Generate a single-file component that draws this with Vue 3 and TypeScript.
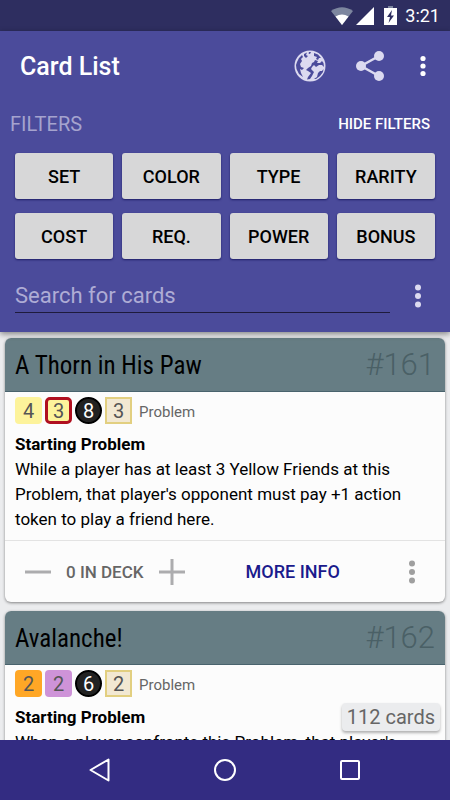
<script setup lang="ts">
import { ref } from 'vue'

interface Pip {
  value: number
  kind: string
}

interface Card {
  name: string
  number: number
  pips: Pip[]
  type: string
  heading: string
  text: string
  inDeck: number
}

const filters: string[] = ['SET', 'COLOR', 'TYPE', 'RARITY', 'COST', 'REQ.', 'POWER', 'BONUS']
const query = ref('')
const filtersOpen = ref(true)

const cards = ref<Card[]>([
  {
    name: 'A Thorn in His Paw',
    number: 161,
    pips: [
      { value: 4, kind: 'yellow' },
      { value: 3, kind: 'outlined' },
      { value: 8, kind: 'round' },
      { value: 3, kind: 'bonus' },
    ],
    type: 'Problem',
    heading: 'Starting Problem',
    text: "While a player has at least 3 Yellow Friends at this Problem, that player's opponent must pay +1 action token to play a friend here.",
    inDeck: 0,
  },
  {
    name: 'Avalanche!',
    number: 162,
    pips: [
      { value: 2, kind: 'orange' },
      { value: 2, kind: 'purple' },
      { value: 6, kind: 'round' },
      { value: 2, kind: 'bonus' },
    ],
    type: 'Problem',
    heading: 'Starting Problem',
    text: "When a player confronts this Problem, that player's",
    inDeck: 0,
  },
])
</script>

<template>
  <div class="screen">
    <div class="status">
      <svg class="wifi" width="22" height="18" viewBox="0 0 22 18" aria-hidden="true">
        <path d="M0 4Q11-3.500 22 4L11 18Z" fill="#7d869f" />
        <path d="M4.500 9.500Q11 5.500 17.500 9.500L11 18Z" fill="#fff" />
      </svg>
      <svg class="signal" width="18" height="18" viewBox="0 0 18 18" aria-hidden="true">
        <path d="M18 0V18H0Z" fill="#fff" />
      </svg>
      <svg class="battery" width="13" height="19" viewBox="0 0 13 19" aria-hidden="true">
        <path d="M4 0H9V2H4Z" fill="#7d869f" />
        <path d="M0 2H13V19H0Z" fill="#fff" />
        <path d="M8 4L3 11H6L4.500 17L10 9.500H7Z" fill="#2e2e60" />
      </svg>
      <span class="clock">3:21</span>
    </div>

    <header class="header">
      <div class="appbar">
        <h1>Card List</h1>
        <button class="icon" aria-label="Language">
          <svg width="32" height="32" viewBox="0 0 32 32">
            <circle cx="16" cy="16" r="15.500" fill="#dcdaf0" />
            <g fill="#4b4b9b">
              <path d="M3 12L5 8L8 5L9 7L7 9L8 11L6 14L7 17L10 18L8 20L6 19L7 23L9 27L5 24L2.500 19L2 15Z" />
              <path d="M10 4L13 2.500L12 5L14 6L12 8L10 6Z" />
              <path d="M15 2L17 2L16 4L14.500 3.500Z" />
              <path d="M20 3L24 4.500L27 8L25 8L24 10L22 9L23 7L20 6Z" />
              <path d="M21 10L24 11L23 13L26 13L28 11L29.500 13L30 17L28 15L25 15L22 17L20 15L18 17L17 19L20 22L18 26L16 29L13 29.500L14 27L17 23L14 21L12 20L14 18L17 16L18 13L20 12Z" />
              <path d="M29.500 19L29 22L26 26L22 29L20 29L23 27L24 23L26 21L28 21Z" />
            </g>
          </svg>
        </button>
        <button class="icon" aria-label="Share">
          <svg width="28" height="30" viewBox="0 0 28 30">
            <path d="M23 5L5 15L23 25" fill="none" stroke="#dcdaf0" stroke-width="2.500" />
            <circle cx="23" cy="5" r="5" fill="#dcdaf0" />
            <circle cx="5" cy="15" r="5" fill="#dcdaf0" />
            <circle cx="23" cy="25" r="5" fill="#dcdaf0" />
          </svg>
        </button>
        <button class="icon more" aria-label="More options">
          <svg width="6" height="22" viewBox="0 0 6 22" fill="#fff">
            <circle cx="3" cy="3.500" r="2.600" />
            <circle cx="3" cy="11" r="2.600" />
            <circle cx="3" cy="18.500" r="2.600" />
          </svg>
        </button>
      </div>

      <div class="filter-head">
        <h2>FILTERS</h2>
        <button class="hide" @click="filtersOpen = !filtersOpen">HIDE FILTERS</button>
      </div>

      <div v-if="filtersOpen" class="filters">
        <button v-for="f in filters" :key="f" class="filter">{{ f }}</button>
      </div>

      <div class="search">
        <input v-model="query" type="text" placeholder="Search for cards" aria-label="Search for cards" />
        <button class="icon more" aria-label="Search options">
          <svg width="6" height="24" viewBox="0 0 6 24" fill="#dcdaf0">
            <circle cx="3" cy="3.500" r="3" />
            <circle cx="3" cy="12" r="3" />
            <circle cx="3" cy="20.500" r="3" />
          </svg>
        </button>
      </div>
    </header>

    <main class="list">
      <article v-for="card in cards" :key="card.number" class="card">
        <div class="card-head">
          <h3>{{ card.name }}</h3>
          <span class="number">#{{ card.number }}</span>
        </div>
        <div class="card-body">
          <div class="pips">
            <span v-for="(pip, i) in card.pips" :key="i" class="pip" :class="pip.kind">{{ pip.value }}</span>
            <span class="type">{{ card.type }}</span>
          </div>
          <p class="rules"><b>{{ card.heading }}</b>{{ card.text }}</p>
        </div>
        <div class="actions">
          <button class="icon" aria-label="Remove from deck" @click="card.inDeck = Math.max(0, card.inDeck - 1)">
            <svg width="26" height="26" viewBox="0 0 26 26"><path d="M0 13H26" stroke="#acacae" stroke-width="3" /></svg>
          </button>
          <span class="count">{{ card.inDeck }} IN DECK</span>
          <button class="icon" aria-label="Add to deck" @click="card.inDeck++">
            <svg width="26" height="26" viewBox="0 0 26 26">
              <path d="M0 13H26M13 0V26" stroke="#acacae" stroke-width="3" />
            </svg>
          </button>
          <button class="info">MORE INFO</button>
          <button class="icon card-more" aria-label="Card options">
            <svg width="6" height="24" viewBox="0 0 6 24" fill="#9f9f9f">
              <circle cx="3" cy="3.500" r="3" />
              <circle cx="3" cy="12" r="3" />
              <circle cx="3" cy="20.500" r="3" />
            </svg>
          </button>
        </div>
      </article>
      <div class="total">112 cards</div>
    </main>

    <nav class="nav">
      <button class="icon" aria-label="Back">
        <svg width="24" height="26" viewBox="0 0 24 26">
          <path d="M20.500 2.500V23.500L2.500 13Z" fill="none" stroke="#fff" stroke-width="2" stroke-linejoin="round" />
        </svg>
      </button>
      <button class="icon" aria-label="Home">
        <svg width="24" height="24" viewBox="0 0 24 24">
          <circle cx="12" cy="12" r="10" fill="none" stroke="#fff" stroke-width="2" />
        </svg>
      </button>
      <button class="icon" aria-label="Recent apps">
        <svg width="24" height="24" viewBox="0 0 24 24">
          <rect x="3" y="3" width="18" height="18" rx="1" fill="none" stroke="#fff" stroke-width="2" />
        </svg>
      </button>
    </nav>
  </div>
</template>

<style>
body {
  margin: 0;
}
</style>

<style scoped>
.screen {
  display: flex;
  flex-direction: column;
  height: 100vh;
  overflow: hidden;
  background: #ebecee;
  color: #000;
  font-family: Roboto, "Liberation Sans", sans-serif;
}
h1,
h2,
h3,
p {
  margin: 0;
}
button {
  padding: 0;
  border: 0;
  background: none;
  font-family: inherit;
  cursor: pointer;
}
svg {
  display: block;
}
.icon {
  display: flex;
  align-items: center;
  justify-content: center;
}
.status {
  flex: none;
  display: flex;
  align-items: center;
  justify-content: flex-end;
  box-sizing: border-box;
  height: 31px;
  padding-right: 10px;
  background: #2e2e60;
}
.signal {
  margin-left: 3px;
}
.battery {
  margin-left: 10px;
}
.clock {
  margin-left: 8px;
  color: #fff;
  font-size: 18px;
  font-weight: 400;
}
.header {
  flex: none;
  position: relative;
  z-index: 1;
  background: #4b4b9b;
  box-shadow: 0 2px 6px rgba(0, 0, 0, 0.45);
}
.appbar {
  display: flex;
  align-items: center;
  height: 70px;
  padding: 0 10px 0 20px;
}
h1 {
  flex: 1;
  color: #fff;
  font-size: 25px;
  font-weight: 500;
}
.appbar .icon {
  width: 60px;
  height: 60px;
}
.appbar .more {
  width: 35px;
  margin-left: 5px;
}
.filter-head {
  display: flex;
  align-items: center;
  justify-content: space-between;
  height: 46px;
  padding: 0 20px 0 10px;
}
h2 {
  color: #a5a3ce;
  font-size: 20px;
  font-weight: 400;
}
.hide {
  color: #fff;
  font-size: 15px;
  font-weight: 500;
}
.filters {
  display: grid;
  grid-template-columns: repeat(4, 1fr);
  gap: 14px 9px;
  padding: 6px 15px 0;
}
.filter {
  height: 46px;
  border-radius: 3px;
  background: #d7d7d8;
  box-shadow: 0 1px 2px rgba(10, 10, 80, 0.7);
  color: #000;
  font-size: 18px;
  font-weight: 500;
}
.search {
  display: flex;
  align-items: center;
  height: 73px;
  padding-left: 15px;
}
.search input {
  flex: 1;
  min-width: 0;
  box-sizing: border-box;
  height: 34px;
  padding: 0;
  border: 0;
  border-bottom: 1px solid #1e1b3c;
  border-radius: 0;
  outline: 0;
  background: none;
  color: #fff;
  font-family: inherit;
  font-size: 22px;
}
.search input::placeholder {
  color: #aeacd5;
  opacity: 1;
}
.search .more {
  width: 55px;
  margin-right: 5px;
  height: 48px;
}
.list {
  flex: 1;
  min-height: 0;
  position: relative;
  display: flex;
  flex-direction: column;
  gap: 9px;
  padding: 6px 5px 0;
  overflow: hidden;
}
.card {
  flex: none;
  border-radius: 6px;
  background: #fcfcfc;
  box-shadow: 0 1px 3px rgba(0, 0, 0, 0.45);
  overflow: hidden;
}
.card-head {
  display: flex;
  align-items: center;
  justify-content: space-between;
  box-sizing: border-box;
  height: 54px;
  padding: 0 10px;
  border-bottom: 1px solid #49636d;
  background: #667d84;
}
h3 {
  padding-top: 2px;
  font-family: "Roboto Condensed", "Liberation Sans Narrow", Roboto, sans-serif;
  font-size: 25px;
  font-weight: 400;
}
.number {
  color: #4a6066;
  font-size: 31px;
  font-weight: 300;
}
.card-body {
  padding: 5px 10px 8px;
}
.pips {
  display: flex;
  align-items: center;
  gap: 3px;
}
.pip {
  display: flex;
  align-items: center;
  justify-content: center;
  box-sizing: border-box;
  width: 27px;
  height: 27px;
  border-radius: 4px;
  color: #555;
  font-size: 20px;
}
.yellow {
  background: #fdf39b;
}
.outlined {
  border: 3px solid #b01020;
  border-radius: 5px;
  background: #fdf39b;
}
.orange {
  background: #ffa726;
}
.purple {
  background: #ce93d8;
}
.round {
  border: 2px solid #000;
  border-radius: 50%;
  background: #222;
  color: #fff;
}
.bonus {
  border: 2px solid #e2cf80;
  border-radius: 0;
  background: #f2e8d2;
}
.type {
  margin-left: 4px;
  padding-top: 2px;
  color: #666;
  font-size: 15px;
}
.rules {
  margin-top: 8px;
  font-size: 17px;
  line-height: 25px;
}
.rules b {
  display: block;
}
.actions {
  display: flex;
  align-items: center;
  height: 61px;
  padding: 0 5px;
  border-top: 1px solid #e3e3e3;
}
.actions .icon {
  width: 56px;
  height: 60px;
}
.count {
  color: #666;
  font-size: 17px;
  font-weight: 500;
}
.info {
  margin-left: 46px;
  color: #1a1a8c;
  font-size: 18px;
  font-weight: 500;
}
.actions .card-more {
  margin-left: auto;
}
.total {
  position: absolute;
  right: 10px;
  bottom: 9px;
  padding: 0 5px;
  border-radius: 4px;
  background: #ebecee;
  box-shadow: 0 2px 3px rgba(0, 0, 0, 0.3);
  color: #666;
  font-size: 20px;
  line-height: 28px;
}
.nav {
  flex: none;
  position: relative;
  z-index: 1;
  display: flex;
  align-items: center;
  justify-content: center;
  gap: 65px;
  height: 60px;
  background: #332c82;
}
.nav .icon {
  width: 60px;
  height: 60px;
}
</style>
